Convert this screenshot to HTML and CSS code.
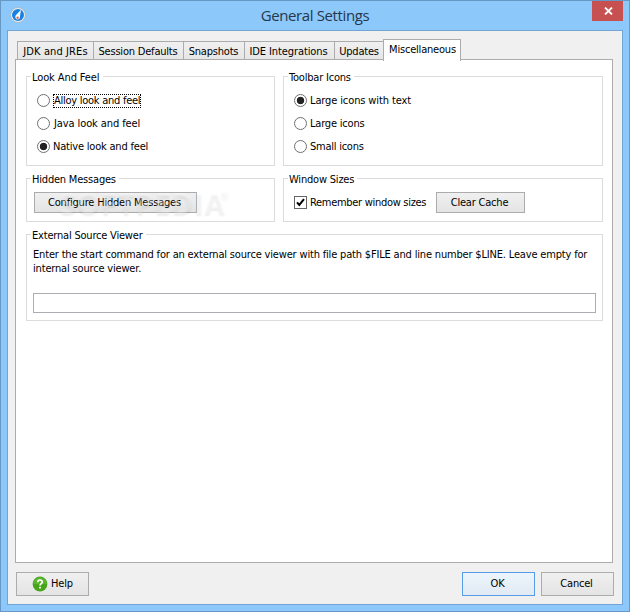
FILE: index.html
```html
<!DOCTYPE html>
<html lang="en">
<head>
<meta charset="utf-8">
<title>General Settings</title>
<link rel="stylesheet" href="styles.css">
</head>
<body>
<div class="window">
  <header class="titlebar">
    <svg class="app-icon" width="16" height="16" viewBox="0 0 16 16"><circle cx="8" cy="8" r="7.4" fill="#eef0f2" stroke="#a9adb2" stroke-width=".7"/><circle cx="8" cy="8" r="6" fill="#1683e4"/><path d="M11 2.8L5.8 8.2C4.6 10.5 5.8 12.6 8.2 12.6C9.8 12 10 10.5 10 9Z" fill="#f8fafc"/><circle cx="7.6" cy="10.8" r="1.2" fill="#ed6544"/></svg>
    <h1>General Settings</h1>
    <div class="close"><svg width="9" height="8" viewBox="0 0 9 8"><path d="M1 .5L8 7.5M8 .5L1 7.5" stroke="#fff" stroke-width="1.8"/></svg></div>
  </header>
  <main class="client">
    <nav class="tabs">
      <div class="tab t1"><span>JDK and JREs</span></div>
      <div class="tab t2"><span>Session Defaults</span></div>
      <div class="tab t3"><span>Snapshots</span></div>
      <div class="tab t4"><span>IDE Integrations</span></div>
      <div class="tab t5"><span>Updates</span></div>
      <div class="tab selected"><span>Miscellaneous</span></div>
    </nav>
    <section class="panel">
      <div class="group look">
        <h2>Look And Feel</h2>
        <div class="option"><i class="radio"></i><span class="focused">Alloy look and feel</span></div>
        <div class="option"><i class="radio"></i><span class="java">Java look and feel</span></div>
        <div class="option"><i class="radio on"></i><span>Native look and feel</span></div>
      </div>
      <div class="group toolbar">
        <h2>Toolbar Icons</h2>
        <div class="option"><i class="radio on"></i><span class="wide">Large icons with text</span></div>
        <div class="option"><i class="radio"></i><span>Large icons</span></div>
        <div class="option"><i class="radio"></i><span class="small">Small icons</span></div>
      </div>
      <div class="group messages">
        <h2>Hidden Messages</h2>
        <div class="button configure"><span>Configure Hidden Messages</span></div>
        <div class="watermark">SOFTPEDIA<sup>®</sup></div>
      </div>
      <div class="group sizes">
        <h2>Window Sizes</h2>
        <div class="size-row">
          <svg class="check" width="13" height="13" viewBox="0 0 13 13"><rect x=".5" y=".5" width="12" height="12" fill="#fff" stroke="#666"/><path d="M3 6.3L5.3 9L10 3.2" fill="none" stroke="#000" stroke-width="2"/></svg>
          <span class="remember">Remember window sizes</span>
          <div class="button clear"><span>Clear Cache</span></div>
        </div>
      </div>
      <div class="group viewer">
        <h2>External Source Viewer</h2>
        <p>Enter the start command for an external source viewer with file path $FILE and line number $LINE. Leave empty for<br>internal source viewer.</p>
        <div class="input"></div>
      </div>
    </section>
    <footer class="actions">
      <div class="button big help"><svg width="16" height="16" viewBox="0 0 16 16"><circle cx="8" cy="8" r="7.4" fill="#48a51b"/><path d="M1.3 8a6.7 6.7 0 0 1 13.4 0Z" fill="#5cb530"/><path d="M5.7 6.2C5.8 3.2 10.4 3.4 10.3 6.1C10.2 7.7 8 7.7 8 9.6M8 10.8V12.4" fill="none" stroke="#fff" stroke-width="1.7"/></svg><span>Help</span></div>
      <div class="button big ok"><span>OK</span></div>
      <div class="button big cancel"><span>Cancel</span></div>
    </footer>
  </main>
</div>
</body>
</html>
```
FILE: styles.css
```css
* { box-sizing: border-box; }
body {
  margin: 0;
  font: 11px/14px Tahoma, "DejaVu Sans Condensed", "DejaVu Sans", sans-serif;
  font-stretch: condensed;
  letter-spacing: -0.2px;
  color: #000;
}
h1, h2, p { margin: 0; font-weight: 400; }
span { white-space: nowrap; }
.window {
  width: 630px;
  height: 612px;
  padding: 0 6px 6px;
  background: #8cc8fa;
  border: 1px solid #6898c5;
}
.titlebar {
  display: grid;
  grid-template-columns: 31px 1fr 31px;
  height: 29px;
}
.app-icon { margin: 6px 0 0 3px; }
h1 {
  font: 15px/29px "Open Sans", "Noto Sans", sans-serif;
  letter-spacing: -0.38px;
  text-align: center;
  color: #26374b;
}
.close {
  display: flex;
  align-items: center;
  justify-content: center;
  height: 20px;
  padding-left: 1px;
  background: #c75050;
}
.client {
  height: 575px;
  padding: 8px 7px;
  background: #f0f0f0;
  border: 1px solid #72a5d3;
}
.tabs { display: flex; align-items: flex-end; height: 20px; padding-left: 2px; }
.tab {
  display: flex;
  justify-content: center;
  height: 18px;
  padding-top: 3px;
  background: linear-gradient(#f0f0f0, #e6e6e6);
  border: 1px solid #acacac;
  border-width: 1px 0 0 1px;
}
.t1 { width: 76px; letter-spacing: 0.1px; }
.t2 { width: 90px; padding-right: 1px; }
.t3 { width: 61px; padding-right: 1px; }
.t4 { width: 90px; padding-right: 2px; letter-spacing: -0.1px; }
.t5 { width: 49px; }
.tab.selected {
  width: 78px;
  height: 22px;
  margin-bottom: -2px;
  padding: 3px 0 0 1px;
  background: #fff;
  border-right-width: 1px;
  position: relative;
}
.panel {
  display: grid;
  grid-template-columns: 249px 320px;
  grid-template-rows: 90px 44px 87px;
  column-gap: 8px;
  row-gap: 12px;
  align-content: start;
  width: 598px;
  height: 504px;
  padding: 16px 0 0 10px;
  background: #fff;
  border: 1px solid #acacac;
}
.group { border: 1px solid #dcdcdc; padding: 0 6px; min-width: 0; position: relative; }
.group h2 {
  width: max-content;
  height: 14px;
  margin: -6px 0 0 -2px;
  padding: 0 3px 0 1px;
  font-size: 11px;
  line-height: 14px;
  background: #fff;
}
.look h2 { letter-spacing: -0.1px; }
.option { display: flex; align-items: center; height: 23px; padding-left: 4px; }
.group h2 + .option { margin-top: 4px; }
.option span { height: 14px; margin-left: 3px; }
.option .focused { padding: 0 1px; letter-spacing: -0.26px; outline: 1px dotted #000; outline-offset: -1px; }
.option .java { padding-left: 1px; letter-spacing: -0.1px; }
.option .wide { letter-spacing: -0.12px; }
.option .small { letter-spacing: -0.25px; }
.radio {
  width: 13px;
  height: 13px;
  background: #fff;
  border: 1px solid #707070;
  border-radius: 50%;
}
.radio.on { background: radial-gradient(circle, #222 0 3.4px, #fff 4.1px); }
.button {
  display: flex;
  align-items: center;
  justify-content: center;
  height: 21px;
  background: linear-gradient(#f0f0f0, #e4e4e4);
  border: 1px solid #acacac;
}
.configure { width: 163px; margin: 5px 0 0 1px; padding-right: 2px; }
.watermark {
  position: absolute;
  left: 33px;
  top: 7px;
  font: bold 29px/34px "Open Sans", sans-serif;
  letter-spacing: 0.9px;
  color: rgba(255, 255, 255, .3);
  text-shadow: 0 2px 2px rgba(0, 0, 0, .07);
  white-space: nowrap;
}
.watermark sup { margin-left: -5px; font-size: 10px; line-height: 0; vertical-align: 15px; }
.size-row { display: flex; align-items: center; margin-top: 5px; }
.check { margin-left: 4px; }
.remember { width: 126px; margin-left: 3px; letter-spacing: -0.3px; }
.clear { width: 89px; padding-right: 2px; }
.viewer { grid-column: 1 / 3; }
.viewer h2 { letter-spacing: -0.2px; }
.viewer p { margin-top: 5px; white-space: nowrap; letter-spacing: -0.175px; }
.input { width: 563px; height: 20px; margin-top: 17px; border: 1px solid #abadb3; }
.actions { display: flex; gap: 6px; padding: 9px 0 0 1px; }
.big { width: 73px; height: 24px; }
.help { gap: 3px; margin-right: 367px; }
.ok { padding-right: 2px; border-color: #569de5; background: linear-gradient(#ecf4fc, #e1e9f2); }
.cancel { padding-right: 2px; }
```
